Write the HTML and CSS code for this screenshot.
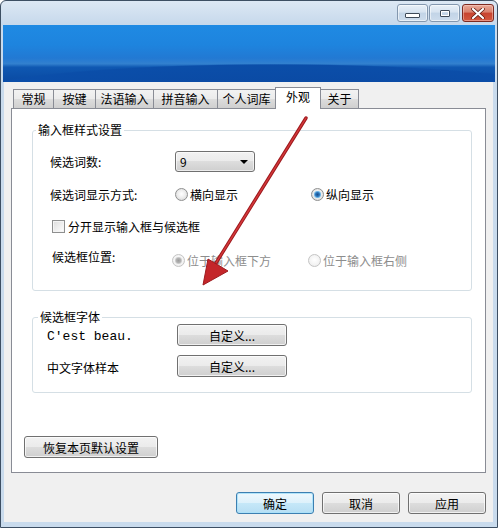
FILE: index.html
```html
<!doctype html>
<html lang="zh-CN">
  <head>
    <meta charset="UTF-8" />
    <title>外观</title>
    <link rel="stylesheet" href="styles.css">
  </head>

  <body>
    <div class="window">
      <!-- Title bar -->
      <div class="titlebar">
        <div class="caption-btn btn-min"><span class="glyph-min"></span></div>
        <div class="caption-btn btn-max"><span class="glyph-max"></span></div>
        <div class="caption-btn btn-close">
          <svg width="14" height="11" viewBox="0 0 14 11">
            <path d="M2 1 L12 10 M12 1 L2 10" stroke="#5a1a12" stroke-width="3.6" stroke-linecap="round" />
            <path d="M2 1 L12 10 M12 1 L2 10" stroke="#ffffff" stroke-width="2.2" stroke-linecap="round" />
          </svg>
        </div>
      </div>

      <div class="banner"></div>

      <div class="dialog">
        <!-- Tabs -->
        <div class="tabs">
          <div class="tab tab-w1">常规</div>
          <div class="tab tab-w2">按键</div>
          <div class="tab tab-w3">法语输入</div>
          <div class="tab tab-w4">拼音输入</div>
          <div class="tab tab-w5">个人词库</div>
          <div class="tab tab-active">外观</div>
          <div class="tab tab-w7">关于</div>
        </div>

        <div class="panel">
          <!-- Input box style -->
          <fieldset class="group group-style">
            <legend>输入框样式设置</legend>
            <div class="row row-count">
              <label class="field-label">候选词数:</label>
              <div class="combo">
                <span>9</span>
                <span class="combo-arrow"></span>
              </div>
            </div>
            <div class="row row-mode">
              <label class="field-label">候选词显示方式:</label>
              <div class="option">
                <span class="radio"></span>
                <span>横向显示</span>
              </div>
              <div class="option">
                <span class="radio checked"></span>
                <span>纵向显示</span>
              </div>
            </div>
            <div class="row row-split">
              <span class="checkbox"></span>
              <span>分开显示输入框与候选框</span>
            </div>
            <div class="row row-pos">
              <label class="field-label">候选框位置:</label>
              <div class="options-disabled">
                <div class="option disabled">
                  <span class="radio checked"></span>
                  <span>位于输入框下方</span>
                </div>
                <div class="option disabled">
                  <span class="radio"></span>
                  <span>位于输入框右侧</span>
                </div>
              </div>
            </div>
          </fieldset>

          <!-- Candidate font -->
          <fieldset class="group group-font">
            <legend>候选框字体</legend>
            <div class="row row-font">
              <label class="font-label sample-latin">C'est beau.</label>
              <button class="btn btn-custom">自定义...</button>
            </div>
            <div class="row row-font">
              <label class="font-label">中文字体样本</label>
              <button class="btn btn-custom">自定义...</button>
            </div>
          </fieldset>

          <button class="btn btn-restore">恢复本页默认设置</button>
        </div>

        <!-- Dialog buttons -->
        <div class="actions">
          <button class="btn btn-action btn-default">确定</button>
          <button class="btn btn-action">取消</button>
          <button class="btn btn-action">应用</button>
        </div>
      </div>

      <!-- Red annotation arrow -->
      <svg class="annotation" width="498" height="528" viewBox="0 0 498 528">
        <line x1="305" y1="117" x2="215" y2="262" stroke="#9e1b1f" stroke-width="3.4" stroke-linecap="round" />
        <line x1="305" y1="117" x2="215" y2="262" stroke="#d5383a" stroke-width="1.4" stroke-linecap="round" />
        <polygon points="202,284 207,258 227,270" fill="#c4262a" stroke="#9e1b1f" stroke-width="1" stroke-linejoin="round" />
      </svg>
    </div>
  </body>
</html>
```

FILE: styles.css
```css
body {
  margin: 0;
  font-family: "Noto Sans CJK SC", "Liberation Sans", sans-serif;
  font-size: 12px;
  color: #000;
  background-color: #ffffff;
}

.window {
  position: relative;
  width: 498px;
  height: 528px;
  box-sizing: border-box;
  border: 1px solid #3d4f63;
  border-radius: 6px 6px 0 0;
  padding: 0 4px 5px 3px;
  background: linear-gradient(to bottom, #dce8f4 0px, #c6d8eb 24px, #c9dbed 25px, #c9dbed 100%);
  overflow: hidden;
}

/* Title bar */
.titlebar {
  height: 24px;
  box-sizing: border-box;
  padding-top: 3px;
  margin-right: -1px;
  display: flex;
  justify-content: flex-end;
  gap: 1px;
}

.caption-btn {
  height: 18px;
  box-sizing: border-box;
  border: 1px solid #8397ae;
  border-radius: 3px;
  display: flex;
  align-items: center;
  justify-content: center;
}

.btn-min,
.btn-max {
  width: 31px;
  background: linear-gradient(to bottom, #e8f0f8 0%, #d6e3f0 45%, #c2d4e7 50%, #cddcec 100%);
  box-shadow: inset 0 0 0 1px rgba(255, 255, 255, 0.55);
}

.btn-max {
  margin-right: 1px;
}

.btn-close {
  width: 32px;
  border-color: #7d2a21;
  background: linear-gradient(to bottom, #e9a999 0%, #d9806c 45%, #c7432f 50%, #d4583f 100%);
  box-shadow: inset 0 0 0 1px rgba(255, 220, 210, 0.45);
}

.glyph-min {
  width: 13px;
  height: 3px;
  margin-top: 5px;
  border: 1px solid #3e4a58;
  background-color: #ffffff;
  border-radius: 1px;
}

.glyph-max {
  width: 8px;
  height: 5px;
  border: 1px solid #3e4a58;
  box-shadow: inset 0 0 0 1px #ffffff;
  border-radius: 1px;
}

/* Blue banner */
.banner {
  height: 57px;
  margin: 0 -2px 0 -1px;
  background:
    radial-gradient(ellipse 560px 60px at 55% 128%, #0a47a0 0%, #0b4ea9 55%, rgba(11, 78, 169, 0) 57%),
    linear-gradient(to bottom, #1f8ae3 0%, #1e84de 35%, #2279d3 58%, #3280cf 68%, #0f58b2 74%, #0a4aa2 100%);
}

/* Dialog body */
.dialog {
  height: 440px;
  box-sizing: border-box;
  padding: 5px 7px 0 7px;
  background-color: #f0f0f0;
}

.tabs {
  display: flex;
  align-items: flex-end;
  height: 22px;
  padding-left: 2px;
}

.tab {
  height: 19px;
  margin-bottom: 1px;
  margin-left: -1px;
  box-sizing: border-box;
  border: 1px solid #898c95;
  border-bottom: none;
  background: linear-gradient(to bottom, #f2f2f2 0%, #ebebeb 50%, #dddddd 50%, #cfcfcf 100%);
  display: flex;
  align-items: center;
  justify-content: center;
  line-height: 16px;
}

.tab-w1 {
  width: 41px;
  margin-left: 0;
}

.tab-w2 {
  width: 43px;
}

.tab-w3 {
  width: 59px;
}

.tab-w4 {
  width: 65px;
}

.tab-w5 {
  width: 59px;
}

.tab-active {
  position: relative;
  z-index: 1;
  width: 46px;
  height: 22px;
  margin-bottom: 0;
  background: #ffffff;
  padding-bottom: 3px;
}

.tab-w7 {
  width: 39px;
}

.panel {
  height: 365px;
  margin-top: -1px;
  box-sizing: border-box;
  border: 1px solid #898c95;
  background-color: #ffffff;
  padding: 14px 12px 0 12px;
}

/* Group boxes */
.group {
  width: 440px;
  box-sizing: border-box;
  margin: 0 0 0 8px;
  padding: 0;
  border: 1px solid #d5dfe5;
  border-radius: 3px;
  min-width: 0;
}

.group legend {
  margin-left: 3px;
  padding: 0 2px;
  line-height: 14px;
}

.group-style {
  height: 168px;
}

.group-style .row {
  padding-left: 17px;
}

.group-font {
  height: 83px;
  margin-top: 19px;
}

.group-font legend {
  margin-left: 5px;
}

.row {
  display: flex;
  align-items: center;
  height: 21px;
}

.row-count {
  margin-top: 14px;
}

.row-mode {
  margin-top: 12px;
}

.group-style .row-split {
  margin-top: 11px;
  padding-left: 19px;
}

.group-style .row-pos {
  margin-top: 9px;
  padding-left: 19px;
}

.field-label {
  width: 125px;
}

.row-pos .field-label {
  width: 120px;
}

/* Combo box */
.combo {
  width: 80px;
  height: 21px;
  box-sizing: border-box;
  border: 1px solid #707070;
  border-radius: 3px;
  padding: 0 6px 0 4px;
  display: flex;
  align-items: center;
  justify-content: space-between;
  background: linear-gradient(to bottom, #f2f2f2 0%, #ebebeb 50%, #dddddd 50%, #cfcfcf 100%);
  box-shadow: inset 0 0 0 1px rgba(255, 255, 255, 0.6);
}

.combo-arrow {
  width: 0;
  height: 0;
  border-left: 4px solid transparent;
  border-right: 4px solid transparent;
  border-top: 4px solid #000;
  margin-top: 1px;
}

/* Radios and checkbox */
.option {
  display: flex;
  align-items: center;
  width: 136px;
}

.radio {
  width: 13px;
  height: 13px;
  box-sizing: border-box;
  margin-right: 2px;
  border: 1px solid #8e8f8f;
  border-radius: 50%;
  background: radial-gradient(circle at 50% 45%, #ffffff 0%, #eeeeee 45%, #cfcfcf 100%);
}

.radio.checked {
  background:
    radial-gradient(circle at 50% 50%, #1a4f8c 0px, #2d76bb 2px, #8ccaf0 3.4px, rgba(140, 202, 240, 0) 4px),
    radial-gradient(circle at 50% 45%, #ffffff 0%, #eeeeee 45%, #cfcfcf 100%);
}

.options-disabled {
  display: flex;
  margin-top: 8px;
}

.option.disabled {
  color: #8d8d8d;
}

.option.disabled .radio {
  border-color: #c4c4c4;
  background: radial-gradient(circle at 50% 45%, #ffffff 0%, #f3f3f3 60%, #e4e4e4 100%);
}

.option.disabled .radio.checked {
  background:
    radial-gradient(circle at 50% 50%, #9c9c9c 0px, #b4b4b4 2.4px, #e2e2e2 3.6px, rgba(226, 226, 226, 0) 4px),
    radial-gradient(circle at 50% 45%, #ffffff 0%, #f3f3f3 60%, #e4e4e4 100%);
}

.checkbox {
  width: 13px;
  height: 13px;
  box-sizing: border-box;
  margin-right: 3px;
  border: 1px solid #8e8f8f;
  background: linear-gradient(135deg, #dcdcdc 0%, #f4f4f4 70%, #ffffff 100%);
  box-shadow: inset 0 0 0 1px #f4f4f4;
}

/* Font rows */
.row-font {
  height: 22px;
  padding-left: 14px;
}

.row-font + .row-font {
  margin-top: 9px;
}

.font-label {
  width: 130px;
  padding-top: 3px;
}

.sample-latin {
  font-family: "Liberation Mono", "Courier New", monospace;
  font-size: 13px;
}

/* Buttons */
.btn {
  height: 22px;
  box-sizing: border-box;
  padding: 0;
  border: 1px solid #707070;
  border-radius: 3px;
  font-family: "Noto Sans CJK SC", "Liberation Sans", sans-serif;
  font-size: 12px;
  color: #000;
  background: linear-gradient(to bottom, #f2f2f2 0%, #ebebeb 50%, #dddddd 50%, #cfcfcf 100%);
  box-shadow: inset 0 0 0 1px rgba(255, 255, 255, 0.7);
  cursor: pointer;
}

.btn-custom {
  width: 110px;
}

.btn-restore {
  display: block;
  width: 134px;
  margin-top: 43px;
}

.actions {
  display: flex;
  justify-content: flex-end;
  gap: 8px;
  margin-top: 19px;
}

.btn-action {
  width: 78px;
}

.btn-default {
  border-color: #3c7fb1;
  background: linear-gradient(to bottom, #eef8fd 0%, #ddf1fb 50%, #c6e8f8 50%, #b6def3 100%);
  box-shadow: inset 0 0 0 1px rgba(170, 225, 250, 0.9);
}

/* Annotation overlay */
.annotation {
  position: absolute;
  top: 0;
  left: 0;
  pointer-events: none;
}
```
